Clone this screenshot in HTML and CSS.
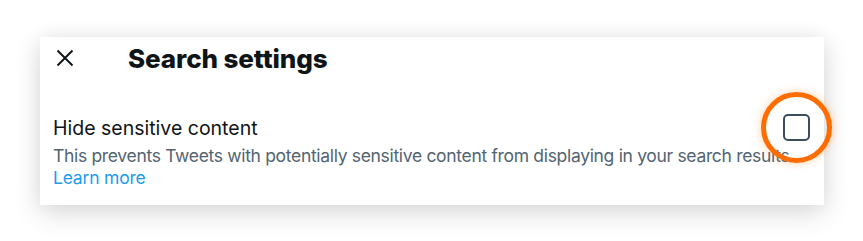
FILE: index.html
```html
<!DOCTYPE html>
<html lang="en">
<head>
<meta charset="utf-8">
<title>Search settings</title>
<link rel="stylesheet" href="styles.css">
</head>
<body>
<div class="stage">
  <div class="card">
    <div class="header">
      <button class="close" aria-label="Close">
        <svg viewBox="0 0 24 24" width="24" height="24"><path d="M4.5 4.5 L19.5 19.5 M19.5 4.5 L4.5 19.5" stroke="#0f1419" stroke-width="1.9" fill="none"/></svg>
      </button>
      <h1 class="title">Search settings</h1>
    </div>
    <div class="setting">
      <div class="setting-text">
        <div class="label">Hide sensitive content</div>
        <div class="desc">This prevents Tweets with potentially sensitive content from displaying in your search results.</div>
        <a class="link" href="#">Learn more</a>
      </div>
      <div class="check-wrap">
        <span class="checkbox"></span>
        <span class="highlight"></span>
      </div>
    </div>
  </div>
</div>
</body>
</html>
```
FILE: styles.css
```css
* { box-sizing: border-box; }
html, body { margin: 0; padding: 0; background: #ffffff; }
body { font-family: Inter, "Noto Sans", sans-serif; color: #0f1419; }
.stage { padding: 37px 0 36px 40px; min-height: 241px; }
.card {
  position: relative;
  width: 784px;
  height: 168px;
  background: #ffffff;
  box-shadow: 0 8px 26px rgba(0,0,0,0.14), 0 0 18px rgba(0,0,0,0.05);
}
.header {
  display: flex;
  align-items: center;
  height: 41px;
  padding-left: 13px;
}
.close {
  border: 0;
  background: none;
  padding: 0;
  width: 24px;
  height: 24px;
  display: flex;
}
.title {
  margin: 0 0 0 51px;
  font-size: 26px;
  font-weight: 800;
  letter-spacing: -0.1px;
  line-height: 30px;
  padding-top: 2px;
}
.setting {
  display: flex;
  align-items: flex-start;
  padding: 37px 0 0 13px;
}
.setting-text { flex: 1; min-width: 0; }
.label { font-size: 19.5px; line-height: 26px; color: #0f1419; }
.desc {
  font-size: 17.5px;
  line-height: 22px;
  letter-spacing: -0.32px;
  color: #536471;
  white-space: nowrap;
  margin-top: 4px;
}
.link { display: block; font-size: 17.5px; line-height: 22px; letter-spacing: -0.2px; color: #1d9bf0; text-decoration: none; }
.check-wrap {
  position: absolute;
  right: 14px;
  top: 77px;
  width: 27px;
  height: 27px;
}
.checkbox {
  display: block;
  width: 27px;
  height: 27px;
  border: 2.6px solid #3d4d5e;
  border-radius: 5px;
}
.highlight {
  position: absolute;
  left: -22px;
  top: -22px;
  width: 71px;
  height: 71px;
  border: 5px solid #ff6d00;
  border-radius: 50%;
  box-shadow: 0 0 8px rgba(255,120,0,0.35);
}
```
